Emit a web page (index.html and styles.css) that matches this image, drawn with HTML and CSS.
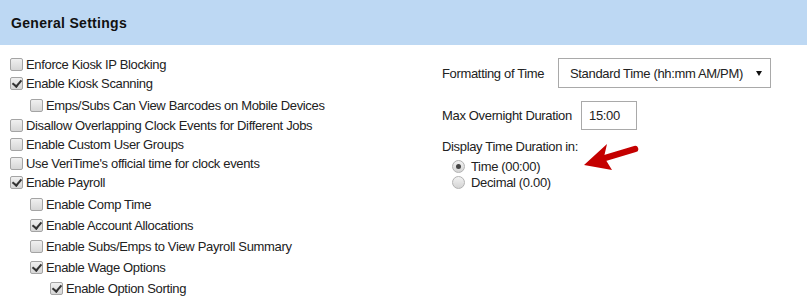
FILE: index.html
```html
<!DOCTYPE html>
<html lang="en">
<head>
    <meta charset="UTF-8">
    <title>General Settings</title>
    <link rel="stylesheet" href="styles.css">
</head>
<body>
    <div class="panel-head">
        <h2>General Settings</h2>
    </div>

    <div class="panel-body">
        <div class="options">
            <label class="row"><span class="box"></span>Enforce Kiosk IP Blocking</label>
            <label class="row"><span class="box checked"></span>Enable Kiosk Scanning</label>
            <div class="sub">
                <label class="row"><span class="box"></span>Emps/Subs Can View Barcodes on Mobile Devices</label>
            </div>
            <label class="row"><span class="box"></span>Disallow Overlapping Clock Events for Different Jobs</label>
            <label class="row"><span class="box"></span>Enable Custom User Groups</label>
            <label class="row"><span class="box"></span>Use VeriTime's official time for clock events</label>
            <label class="row"><span class="box checked"></span>Enable Payroll</label>
            <div class="sub">
                <label class="row"><span class="box"></span>Enable Comp Time</label>
                <label class="row"><span class="box checked"></span>Enable Account Allocations</label>
                <label class="row"><span class="box"></span>Enable Subs/Emps to View Payroll Summary</label>
                <label class="row"><span class="box checked"></span>Enable Wage Options</label>
                <div class="sub">
                    <label class="row"><span class="box checked"></span>Enable Option Sorting</label>
                </div>
            </div>
        </div>

        <div class="time-settings">
            <div class="field">
                <span class="field-label">Formatting of Time</span>
                <div class="select">
                    <span>Standard Time (hh:mm AM/PM)</span>
                    <span class="caret"></span>
                </div>
            </div>
            <div class="field field-max">
                <span class="field-label">Max Overnight Duration</span>
                <div class="text-input">15:00</div>
            </div>
            <div class="duration">
                <div class="duration-title">Display Time Duration in:</div>
                <label class="radio-row"><span class="radio on"></span>Time (00:00)</label>
                <label class="radio-row"><span class="radio"></span>Decimal (0.00)</label>
                <svg class="pointer" viewBox="0 0 56 30" width="56" height="30">
                    <path d="M22 16 L52 7" stroke="#c40000" stroke-width="6.5" stroke-linecap="round" fill="none"/>
                    <path d="M1 23 L24 2 L21 15 L29 28 Z" fill="#c40000"/>
                </svg>
            </div>
        </div>
    </div>
</body>
</html>
```

FILE: styles.css
```css
* {
    margin: 0;
    padding: 0;
    box-sizing: border-box;
}

body {
    font-family: "Liberation Sans", Arial, sans-serif;
    font-size: 13px;
    letter-spacing: -0.34px;
    color: #222;
    background: #fff;
    width: 807px;
    height: 307px;
    overflow: hidden;
}

.panel-head {
    background: #bdd8f3;
    height: 45px;
    padding: 15px 11px 0;
}

.panel-head h2 {
    font-size: 14px;
    font-weight: bold;
    color: #111;
    letter-spacing: 0.3px;
}

.panel-body {
    display: grid;
    grid-template-columns: 442px 1fr;
}

.options {
    padding: 10px 0 0 10px;
}

.row {
    display: flex;
    align-items: center;
    height: 19px;
    white-space: nowrap;
}

.sub {
    padding: 2px 0 0 20px;
}

.sub .row {
    height: 21px;
}

.sub .sub {
    padding-top: 0;
}

.box {
    width: 13px;
    height: 13px;
    margin-right: 3px;
    border: 1px solid #a4a4a4;
    border-radius: 2px;
    background: linear-gradient(#f0f0f0, #d6d6d6);
    position: relative;
    flex-shrink: 0;
}

.box.checked::after {
    content: "";
    position: absolute;
    left: 3px;
    top: 0px;
    width: 4px;
    height: 7px;
    border: solid #333;
    border-width: 0 2px 2px 0;
    transform: rotate(40deg);
}

.time-settings {
    padding-top: 13px;
}

.field {
    display: flex;
    align-items: center;
}

.field-label {
    width: 116px;
}

.select {
    width: 213px;
    height: 30px;
    border: 1px solid #a9a9a9;
    display: flex;
    align-items: center;
    justify-content: space-between;
    padding: 0 8px 0 11px;
}

.caret {
    width: 0;
    height: 0;
    border-left: 3.5px solid transparent;
    border-right: 3.5px solid transparent;
    border-top: 5px solid #111;
    margin-top: 1px;
}

.field-max {
    margin-top: 13px;
}

.field-max .field-label {
    width: 139px;
}

.text-input {
    width: 56px;
    height: 29px;
    border: 1px solid #a9a9a9;
    display: flex;
    align-items: center;
    padding-left: 7px;
}

.duration {
    position: relative;
    margin-top: 9px;
}

.duration-title {
    line-height: 16px;
    margin-bottom: 3px;
}

.radio-row {
    display: flex;
    align-items: center;
    height: 16px;
    padding-left: 10px;
}

.radio {
    width: 13px;
    height: 13px;
    border-radius: 50%;
    border: 1px solid #b2b2b2;
    background: linear-gradient(#f2f2f2, #d4d4d4);
    margin-right: 6px;
    position: relative;
}

.radio.on::after {
    content: "";
    position: absolute;
    left: 3px;
    top: 3px;
    width: 5px;
    height: 5px;
    border-radius: 50%;
    background: #444;
}

.pointer {
    position: absolute;
    left: 141px;
    top: 3px;
}
```
